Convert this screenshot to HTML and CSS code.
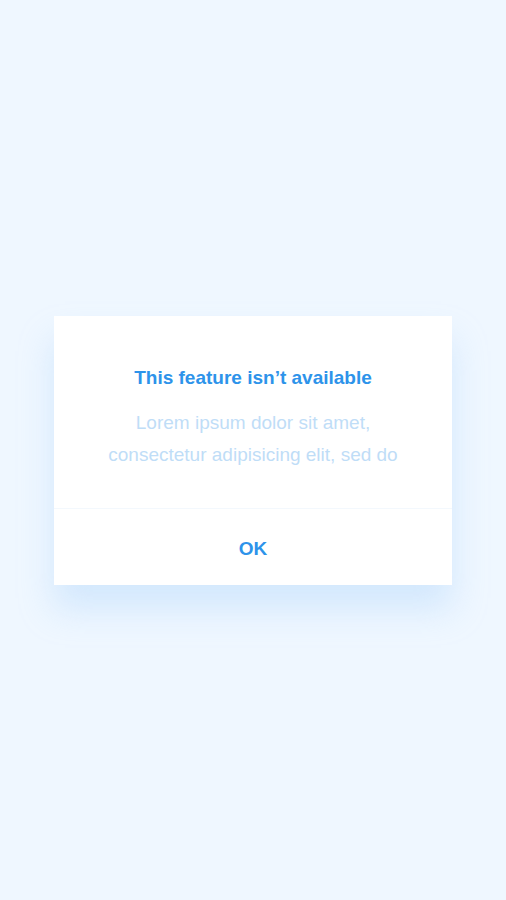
FILE: index.html
```html
<!DOCTYPE html>
<html>
<head>
<meta charset="utf-8">
<link rel="stylesheet" href="styles.css">
</head>
<body>
<div class="screen">
  <div class="dialog">
    <div class="dialog-body">
      <h1 class="dialog-title">This feature isn’t available</h1>
      <p class="dialog-text">Lorem ipsum dolor sit amet,<br>consectetur adipisicing elit, sed do</p>
    </div>
    <div class="dialog-footer">
      <button class="dialog-btn">OK</button>
    </div>
  </div>
</div>
</body>
</html>
```
FILE: styles.css
```css
* { box-sizing: border-box; }
html, body { margin: 0; padding: 0; }
body {
  background: #eff7ff;
  font-family: "Liberation Sans", Arial, sans-serif;
}
.screen {
  width: 506px;
  height: 900px;
  display: flex;
  justify-content: center;
  padding-top: 316px;
}
.dialog {
  width: 398px;
  height: 269px;
  background: #ffffff;
  display: flex;
  flex-direction: column;
  box-shadow: 0 24px 32px rgba(170, 210, 250, 0.4);
}
.dialog-body {
  padding: 51px 20px 0;
  height: 193px;
  text-align: center;
  border-bottom: 1px solid #f3f8fd;
}
.dialog-title {
  margin: 0;
  font-size: 19px;
  line-height: 22px;
  font-weight: bold;
  color: #2d93ea;
}
.dialog-text {
  margin: 18px 0 0;
  font-size: 19px;
  line-height: 32px;
  color: #bfddf7;
}
.dialog-footer {
  flex: 1;
  display: flex;
  align-items: center;
  justify-content: center;
}
.dialog-btn {
  border: none;
  background: none;
  padding: 4px 0 0;
  font-family: "Liberation Sans", Arial, sans-serif;
  font-size: 19px;
  font-weight: bold;
  color: #2d93ea;
}
```
